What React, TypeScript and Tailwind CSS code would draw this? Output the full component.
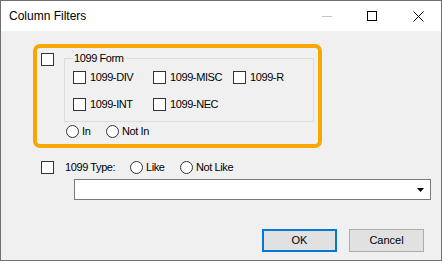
import React from "react";

const Check = () => (
  <div className="w-[13px] h-[13px] border border-[#333333] bg-white shrink-0" />
);

const Radio = () => (
  <div className="w-[13px] h-[13px] rounded-full border border-[#333333] bg-white shrink-0" />
);

const CheckItem = ({ label }: { label: string }) => (
  <div className="flex items-center w-[80px] gap-[4px]">
    <Check />
    <span className="leading-[13px]">{label}</span>
  </div>
);

const RadioItem = ({ label, w }: { label: string; w?: string }) => (
  <div className={`flex items-center gap-[3px] ${w ?? ""}`}>
    <Radio />
    <span className="leading-[13px]">{label}</span>
  </div>
);

export default function App() {
  return (
    <div
      className="w-[442px] h-[261px] flex flex-col border-x border-b border-t border-[#707070] text-black text-[11px] tracking-[-0.4px] overflow-hidden"
      style={{ fontFamily: '"Liberation Sans", Arial, sans-serif' }}
    >
      {/* Title bar */}
      <div className="h-[30px] bg-white flex items-center shrink-0">
        <span className="pl-[8px] text-[12px] tracking-normal flex-1">Column Filters</span>
        <div className="w-[46px] h-full flex items-center justify-center">
          <div className="w-[10px] h-[1px] bg-[#c4c4c4] ml-[2px]" />
        </div>
        <div className="w-[46px] h-full flex items-center justify-center">
          <div className="w-[10px] h-[10px] border border-black" />
        </div>
        <div className="w-[46px] h-full flex items-center justify-center">
          <svg width="11" height="11" viewBox="0 0 11 11">
            <path d="M0.5 0.5 L10.5 10.5 M10.5 0.5 L0.5 10.5" stroke="black" strokeWidth="1" />
          </svg>
        </div>
      </div>

      {/* Content */}
      <div className="flex-1 bg-[#f0f0f0] flex flex-col">
        {/* Highlighted group */}
        <div className="ml-[32px] mt-[13px] w-[289px] h-[104px] border-[4px] border-[#f7a800] rounded-[7px] flex flex-col">
          <div className="flex items-start pl-[4px]">
            <div className="mt-[5px]">
              <Check />
            </div>
            <div className="ml-[10px] flex flex-col">
              <fieldset className="mt-[4px] w-[249px] border border-[#dcdcdc] pl-[8px] pb-[10px]">
                <legend className="leading-[13px] px-[1px] -ml-[0px]">1099 Form</legend>
                <div className="flex mt-[6px]">
                  <CheckItem label="1099-DIV" />
                  <CheckItem label="1099-MISC" />
                  <CheckItem label="1099-R" />
                </div>
                <div className="flex mt-[14px]">
                  <CheckItem label="1099-INT" />
                  <CheckItem label="1099-NEC" />
                </div>
              </fieldset>
              <div className="flex ml-[2px] mt-[3px]">
                <RadioItem label="In" w="w-[40px]" />
                <RadioItem label="Not In" />
              </div>
            </div>
          </div>
        </div>

        {/* Type row */}
        <div className="ml-[40px] mt-[13px] flex items-center">
          <Check />
          <span className="ml-[11px] leading-[13px] w-[65px]">1099 Type:</span>
          <RadioItem label="Like" w="w-[50px]" />
          <RadioItem label="Not Like" />
        </div>

        {/* Combo */}
        <div className="ml-[73px] mt-[5px] w-[357px] h-[21px] border border-[#7a7a7a] bg-white flex items-center justify-end pr-[6px]">
          <svg width="7" height="4" viewBox="0 0 7 4">
            <path d="M0 0 H7 L3.5 4 Z" fill="black" />
          </svg>
        </div>

        {/* Buttons */}
        <div className="mt-[29px] flex justify-end gap-[12px] pr-[17px]">
          <button className="w-[75px] h-[23px] border-2 border-[#0078d7] bg-[#e1e1e1] leading-none tracking-normal">
            OK
          </button>
          <button className="w-[75px] h-[23px] border border-[#adadad] bg-[#e1e1e1] leading-none tracking-normal">
            Cancel
          </button>
        </div>
      </div>
    </div>
  );
}
